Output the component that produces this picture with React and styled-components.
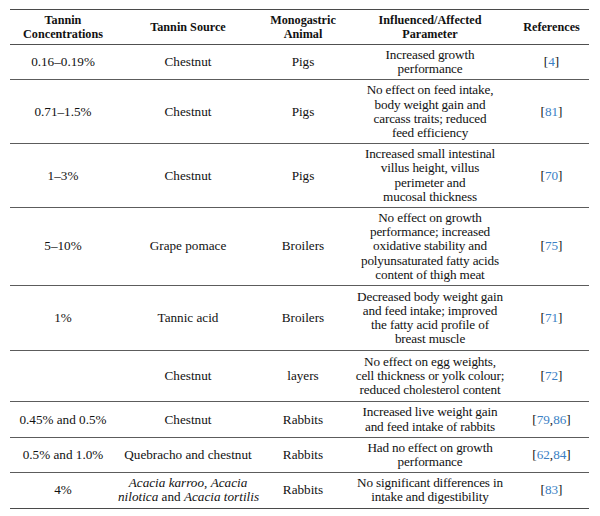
import React from "react";
import styled, { createGlobalStyle } from "styled-components";

const Global = createGlobalStyle`
  html, body { margin: 0; padding: 0; background: #ffffff; }
  body { font-family: "Liberation Serif", "Times New Roman", serif; color: #111; }
`;

const Page = styled.div`
  width: 600px;
  height: 516px;
  padding: 9px 11px 0 10px;
  box-sizing: border-box;
  background: #fff;
`;

const Table = styled.table`
  width: 579px;
  border-collapse: collapse;
  table-layout: fixed;
  border-top: 1.5px solid #4a4a4a;
  border-bottom: 1.5px solid #4a4a4a;
`;

const HeadCell = styled.th`
  font-weight: bold;
  font-size: 12.2px;
  line-height: 14px;
  padding: 3px 2px 3px;
  text-align: center;
  vertical-align: middle;
  border-bottom: 1px solid #505050;
  white-space: nowrap;
  color: #111;
`;

const Row = styled.tr`
  border-bottom: 1px solid #5c5c5c;
  &:last-child { border-bottom: none; }
`;

const Cell = styled.td`
  font-size: 13.2px;
  line-height: 14.2px;
  padding: ${(p) => (p.$extra ? `${3 + p.$extra}px 2px` : "3px 2px")};
  text-align: center;
  vertical-align: middle;
  white-space: nowrap;
  letter-spacing: ${(p) => (p.$tight ? "-0.15px" : "0")};
`;

const RefLink = styled.span`
  color: #3b7fc4;
`;

const Bracket = styled.span`
  color: #111;
`;

const Lines = ({ lines }) =>
  lines.map((l, i) => (
    <React.Fragment key={i}>
      {i > 0 && <br />}
      {l}
    </React.Fragment>
  ));

const Refs = ({ nums }) => (
  <>
    <Bracket>[</Bracket>
    {nums.map((n, i) => (
      <React.Fragment key={n}>
        {i > 0 && <Bracket>,</Bracket>}
        <RefLink>{n}</RefLink>
      </React.Fragment>
    ))}
    <Bracket>]</Bracket>
  </>
);

const rows = [
  { conc: "0.16–0.19%", source: ["Chestnut"], animal: "Pigs", param: ["Increased growth", "performance"], refs: ["4"] },
  { conc: "0.71–1.5%", source: ["Chestnut"], animal: "Pigs", param: ["No effect on feed intake,", "body weight gain and", "carcass traits; reduced", "feed efficiency"], refs: ["81"] },
  { conc: "1–3%", source: ["Chestnut"], animal: "Pigs", param: ["Increased small intestinal", "villus height, villus", "perimeter and", "mucosal thickness"], refs: ["70"] },
  { conc: "5–10%", source: ["Grape pomace"], animal: "Broilers", param: ["No effect on growth", "performance; increased", "oxidative stability and", "polyunsaturated fatty acids", "content of thigh meat"], refs: ["75"] },
  { conc: "1%", source: ["Tannic acid"], animal: "Broilers", param: ["Decreased body weight gain", "and feed intake; improved", "the fatty acid profile of", "breast muscle"], refs: ["71"], extra: 0.5 },
  { conc: "", source: ["Chestnut"], animal: "layers", param: ["No effect on egg weights,", "cell thickness or yolk colour;", "reduced cholesterol content"], refs: ["72"], extra: 1 },
  { conc: "0.45% and 0.5%", source: ["Chestnut"], animal: "Rabbits", param: ["Increased live weight gain", "and feed intake of rabbits"], refs: ["79", "86"] },
  { conc: "0.5% and 1.0%", source: ["Quebracho and chestnut"], animal: "Rabbits", param: ["Had no effect on growth", "performance"], refs: ["62", "84"] },
  {
    conc: "4%",
    source: [
      <><i>Acacia karroo</i>, <i>Acacia</i></>,
      <><i>nilotica</i> and <i>Acacia tortilis</i></>,
    ],
    animal: "Rabbits",
    param: ["No significant differences in", "intake and digestibility"],
    refs: ["83"],
  },
];

export default function App() {
  return (
    <Page>
      <Global />
      <Table>
        <colgroup>
          <col style={{ width: 106 }} />
          <col style={{ width: 144 }} />
          <col style={{ width: 86 }} />
          <col style={{ width: 168 }} />
          <col style={{ width: 75 }} />
        </colgroup>
        <thead>
          <tr>
            <HeadCell>Tannin<br />Concentrations</HeadCell>
            <HeadCell>Tannin Source</HeadCell>
            <HeadCell>Monogastric<br />Animal</HeadCell>
            <HeadCell>Influenced/Affected<br />Parameter</HeadCell>
            <HeadCell>References</HeadCell>
          </tr>
        </thead>
        <tbody>
          {rows.map((r, i) => (
            <Row key={i}>
              <Cell $extra={r.extra}>{r.conc}</Cell>
              <Cell $extra={r.extra}><Lines lines={r.source} /></Cell>
              <Cell $extra={r.extra}>{r.animal}</Cell>
              <Cell $extra={r.extra} $tight><Lines lines={r.param} /></Cell>
              <Cell $extra={r.extra}><Refs nums={r.refs} /></Cell>
            </Row>
          ))}
        </tbody>
      </Table>
    </Page>
  );
}
